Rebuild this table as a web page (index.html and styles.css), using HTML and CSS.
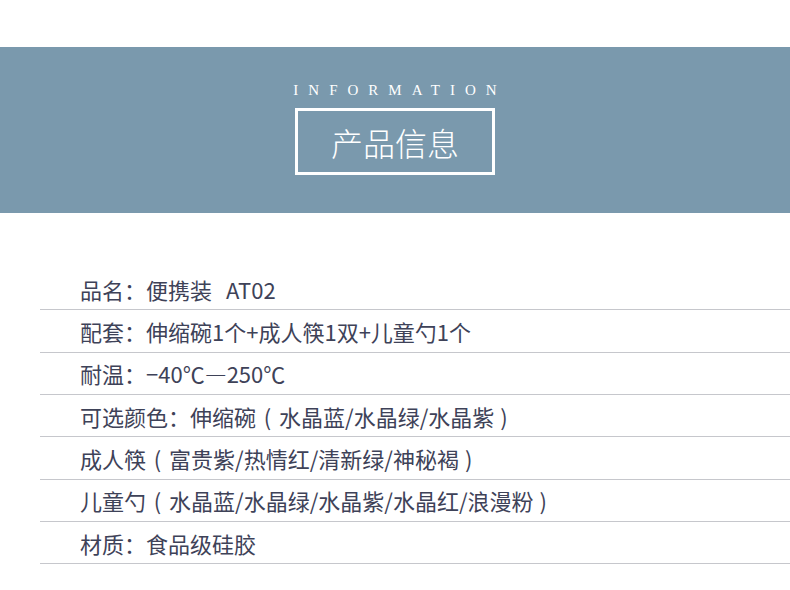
FILE: index.html
```html
<!DOCTYPE html>
<html lang="zh-CN">
<head>
<meta charset="utf-8">
<title>产品信息</title>
<link rel="stylesheet" href="styles.css">
</head>
<body>
<div class="page">
  <header class="band">
    <div class="eyebrow">INFORMATION</div>
    <div class="title-box"><h1 class="title">产品信息</h1></div>
  </header>
  <ul class="specs">
    <li class="row">品名：便携装<span class="gap"></span>AT02</li>
    <li class="row">配套：伸缩碗1个+成人筷1双+儿童勺1个</li>
    <li class="row">耐温：−40℃—250℃</li>
    <li class="row">可选颜色：伸缩碗<span class="po">(</span>水晶蓝/水晶绿/水晶紫<span class="pc">)</span></li>
    <li class="row">成人筷<span class="po">(</span>富贵紫/热情红/清新绿/神秘褐<span class="pc">)</span></li>
    <li class="row">儿童勺<span class="po">(</span>水晶蓝/水晶绿/水晶紫/水晶红/浪漫粉<span class="pc">)</span></li>
    <li class="row">材质：食品级硅胶</li>
  </ul>
</div>
</body>
</html>
```
FILE: styles.css
```css
* { box-sizing: border-box; }
html, body { margin: 0; padding: 0; background: #ffffff; }
body {
  width: 790px;
  height: 590px;
  overflow: hidden;
  font-family: "Noto Sans CJK SC", "Noto Sans", sans-serif;
}
.page { padding-top: 47px; }
.band {
  height: 166px;
  background: #7a99ad;
  display: flex;
  flex-direction: column;
  align-items: center;
  padding-top: 36px;
}
.eyebrow {
  font-family: "Liberation Serif", serif;
  font-size: 15px;
  line-height: 15px;
  letter-spacing: 10px;
  margin-right: -10px;
  color: #ffffff;
}
.title-box {
  margin-top: 10px;
  width: 200px;
  height: 67px;
  border: 3px solid #ffffff;
  display: flex;
  align-items: center;
  justify-content: center;
}
.title {
  margin: 0;
  font-size: 32px;
  font-weight: 300;
  line-height: 1;
  color: #ffffff;
}
.specs {
  list-style: none;
  margin: 55px 0 0 0;
  padding: 0 0 0 40px;
}
.row {
  height: 42.33px;
  border-bottom: 1px solid #c6c7cc;
  display: flex;
  align-items: center;
  padding-left: 40px;
  font-size: 22px;
  color: #3e4258;
  white-space: nowrap;
}
.gap { display: inline-block; width: 14px; }
.po {
  display: inline-block;
  width: 23px;
  text-align: center;
}
.pc {
  display: inline-block;
  margin-left: 6px;
}
```
